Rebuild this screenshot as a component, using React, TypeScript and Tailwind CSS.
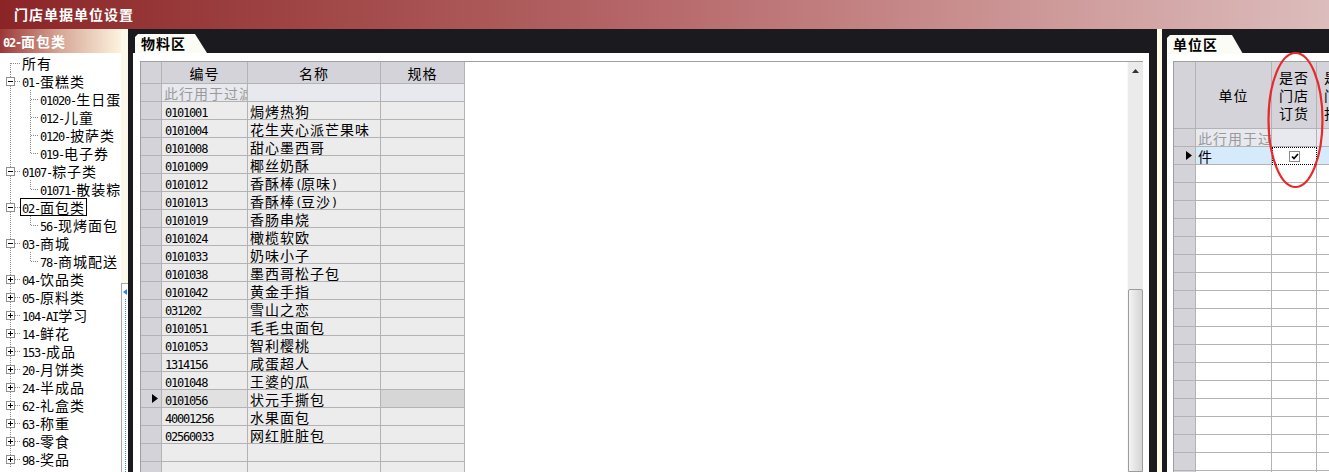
import React from "react";

type TreeNode = {
  label: string;
  level: 0 | 1;
  box?: "-" | "+";
  last?: boolean;
  first?: boolean;
  focus?: boolean;
};

const tree: TreeNode[] = [
  { label: "所有", level: 0, first: true },
  { label: "01-蛋糕类", level: 0, box: "-" },
  { label: "01020-生日蛋糕", level: 1 },
  { label: "012-儿童", level: 1 },
  { label: "0120-披萨类", level: 1 },
  { label: "019-电子券", level: 1, last: true },
  { label: "0107-粽子类", level: 0, box: "-" },
  { label: "01071-散装粽子", level: 1, last: true },
  { label: "02-面包类", level: 0, box: "-", focus: true },
  { label: "56-现烤面包", level: 1, last: true },
  { label: "03-商城", level: 0, box: "-" },
  { label: "78-商城配送", level: 1, last: true },
  { label: "04-饮品类", level: 0, box: "+" },
  { label: "05-原料类", level: 0, box: "+" },
  { label: "104-AI学习", level: 0, box: "+" },
  { label: "14-鲜花", level: 0, box: "+" },
  { label: "153-成品", level: 0, box: "+" },
  { label: "20-月饼类", level: 0, box: "+" },
  { label: "24-半成品", level: 0, box: "+" },
  { label: "62-礼盒类", level: 0, box: "+" },
  { label: "63-称重", level: 0, box: "+" },
  { label: "68-零食", level: 0, box: "+" },
  { label: "98-奖品", level: 0, box: "+" },
];

const items: [string, string][] = [
  ["0101001", "焗烤热狗"],
  ["0101004", "花生夹心派芒果味"],
  ["0101008", "甜心墨西哥"],
  ["0101009", "椰丝奶酥"],
  ["0101012", "香酥棒(原味)"],
  ["0101013", "香酥棒(豆沙)"],
  ["0101019", "香肠串烧"],
  ["0101024", "橄榄软欧"],
  ["0101033", "奶味小子"],
  ["0101038", "墨西哥松子包"],
  ["0101042", "黄金手指"],
  ["031202", "雪山之恋"],
  ["0101051", "毛毛虫面包"],
  ["0101053", "智利樱桃"],
  ["1314156", "咸蛋超人"],
  ["0101048", "王婆的瓜"],
  ["0101056", "状元手撕包"],
  ["40001256", "水果面包"],
  ["02560033", "网红脏脏包"],
];

// ascii runs get a narrow mono face, CJK stays in Noto
function Txt({ s }: { s: string }) {
  const parts = s.split(/([\x20-\x7e]+)/).filter(Boolean);
  return (
    <>
      {parts.map((p, i) =>
        /^[\x20-\x7e]+$/.test(p) ? (
          <span key={i} className="font-['DejaVu_Sans_Mono',monospace] text-[12px] tracking-[-1.2px]">
            {p}
          </span>
        ) : (
          <span key={i}>{p}</span>
        )
      )}
    </>
  );
}

function Arrow() {
  return (
    <svg width="6" height="9" viewBox="0 0 6 9">
      <polygon points="0,0 6,4.5 0,9" fill="#000" />
    </svg>
  );
}

function TreeLines({ n }: { n: TreeNode }) {
  const dot = { stroke: "#8a8a8a", strokeDasharray: "1 1", strokeWidth: 1 };
  if (n.level === 1) {
    return (
      <svg width="38" height="18" className="shrink-0">
        <line x1="10.5" y1="0" x2="10.5" y2="18" {...dot} />
        <line x1="30.5" y1="0" x2="30.5" y2={n.last ? 9.5 : 18} {...dot} />
        <line x1="31" y1="9.5" x2="39" y2="9.5" {...dot} />
      </svg>
    );
  }
  return (
    <svg width="20" height="18" className="shrink-0">
      <line x1="10.5" y1={n.first ? 9 : 0} x2="10.5" y2="18" {...dot} />
      {n.box ? (
        <>
          <line x1="15" y1="9.5" x2="20" y2="9.5" {...dot} />
          <rect x="6.5" y="5.5" width="8" height="8" fill="#fff" stroke="#8f8f8f" />
          <line x1="8" y1="9.5" x2="13" y2="9.5" stroke="#000" />
          {n.box === "+" && <line x1="10.5" y1="7" x2="10.5" y2="12" stroke="#000" />}
        </>
      ) : (
        <line x1="11" y1="9.5" x2="20" y2="9.5" {...dot} />
      )}
    </svg>
  );
}

function Tab({ label, w, cut }: { label: string; w: number; cut: string }) {
  return (
    <div
      className={`h-[19px] bg-[#fcfcf6] pl-[6px] leading-[19px] font-bold ${cut}`}
      style={{ width: w }}
    >
      {label}
    </div>
  );
}

const cell = "h-[18px] border-r border-b border-[#b3b3b3] overflow-hidden whitespace-nowrap leading-[18px]";
const rowHead = `${cell} bg-[#d3d3d9] flex items-center justify-end pr-[3px]`;

export default function App() {
  return (
    <div className="relative w-[1329px] h-[472px] overflow-hidden flex flex-col bg-[#1b1a1f] font-['Noto_Sans_CJK_SC',sans-serif] text-[14px] tracking-[1px] text-black">
      {/* Title */}
      <header className="h-[29px] shrink-0 bg-linear-to-r from-[#8b2427] via-[#b7696b] to-[#dcbcbc] pl-[14px] leading-[29px] font-bold text-white">
        门店单据单位设置
      </header>

      <div className="flex flex-1 min-h-0">
        {/* Category tree */}
        <aside className="flex w-[128px] shrink-0">
          <div className="w-[121px] flex flex-col bg-white overflow-hidden">
            <div className="h-[24px] shrink-0 bg-linear-to-r from-[#9b3638] via-[#d6a898] to-[#fcf3de] pl-[3px] leading-[24px] font-bold text-white">
              <Txt s="02-面包类" />
            </div>
            <div className="pt-[1px]">
              {tree.map((n) => (
                <div key={n.label} className="flex h-[18px] items-center whitespace-nowrap">
                  <TreeLines n={n} />
                  <span
                    className={`px-[1px] h-[18px] leading-[16px] border ${n.focus ? "border-black" : "border-transparent"}`}
                  >
                    <Txt s={n.label} />
                  </span>
                </div>
              ))}
            </div>
          </div>
          <div className="w-[7px] flex flex-col bg-[#fdf9ea]">
            <div className="h-[254px] shrink-0" />
            <div className="flex-1 border-l border-t border-[#a9a9a9] bg-white flex flex-col items-center">
              <svg width="4" height="6" className="mt-[5px]">
                <polygon points="4,0 0,3 4,6" fill="#2f83ea" />
              </svg>
              <div className="flex-1 border-l border-dotted border-[#3d8ef0] mt-[4px]" />
            </div>
          </div>
        </aside>

        <div className="w-[5px] shrink-0" />

        {/* 物料区 */}
        <section className="w-[1016px] shrink-0 flex flex-col">
          <div className="h-[24px] shrink-0 pt-[5px] pl-[2px]">
            <Tab label="物料区" w={72} cut="[clip-path:polygon(0_3px,3px_0,60px_0,72px_100%,0_100%)]" />
          </div>
          <div className="flex-1 min-h-0 bg-white pl-[7px] pr-[6px] pt-[8px] flex">
            <div className="flex-1 min-w-0 border-l border-t border-[#a0a0a0] flex">
              <div className="flex-1 min-w-0 overflow-hidden">
                <div className="grid grid-cols-[21px_86px_133px_84px] w-max">
                  <div className={`${cell} h-[22px] bg-[#d3d3d9]`} />
                  <div className={`${cell} h-[22px] leading-[22px] bg-[#d3d3d9] text-center`}>编号</div>
                  <div className={`${cell} h-[22px] leading-[22px] bg-[#d3d3d9] text-center`}>名称</div>
                  <div className={`${cell} h-[22px] leading-[22px] bg-[#d3d3d9] text-center`}>规格</div>

                  <div className={rowHead} />
                  <div className={`${cell} bg-[#e7e9ef] pl-[2px] text-[#9a9a9a]`}>此行用于过滤</div>
                  <div className={`${cell} bg-[#e7e9ef]`} />
                  <div className={`${cell} bg-[#e7e9ef]`} />

                  {items.map(([code, name]) => {
                    const sel = code === "0101056";
                    return (
                      <React.Fragment key={code}>
                        <div className={rowHead}>{sel && <Arrow />}</div>
                        <div className={`${cell} pl-[3px] ${sel ? "bg-[#e1e1e1]" : "bg-[#ececec]"}`}>
                          <Txt s={code} />
                        </div>
                        <div className={`${cell} pl-[2px] bg-[#ececec]`}>
                          <Txt s={name} />
                        </div>
                        <div className={`${cell} ${sel ? "bg-[#d6d6d6]" : "bg-[#ececec]"}`} />
                      </React.Fragment>
                    );
                  })}

                  {[0, 1, 2].map((i) => (
                    <React.Fragment key={i}>
                      <div className={rowHead} />
                      <div className={`${cell} bg-[#ececec]`} />
                      <div className={`${cell} bg-[#ececec]`} />
                      <div className={`${cell} bg-[#ececec]`} />
                    </React.Fragment>
                  ))}
                </div>
              </div>

              {/* scrollbar */}
              <div className="w-[16px] shrink-0 bg-[#ebebeb] border-l border-[#f8f8f8] flex flex-col items-center">
                <svg width="7" height="4" className="mt-[7px] shrink-0">
                  <polygon points="3.5,0 7,4 0,4" fill="#333" />
                </svg>
                <div className="h-[216px] shrink-0" />
                <div className="w-[15px] flex-1 rounded-t-[2px] border border-[#9c9c9c] bg-linear-to-r from-[#f4f4f4] to-[#d4d4d4]" />
              </div>
            </div>
          </div>
        </section>

        {/* splitter */}
        <div className="w-[8px] shrink-0" />
        <div className="w-[5px] shrink-0 bg-[#fffbea]" />
        <div className="w-[5px] shrink-0" />

        {/* 单位区 */}
        <section className="flex-1 min-w-0 flex flex-col">
          <div className="h-[24px] shrink-0 pt-[6px]">
            <Tab label="单位区" w={76} cut="[clip-path:polygon(0_3px,3px_0,65px_0,76px_100%,0_100%)]" />
          </div>
          <div className="flex-1 min-h-0 bg-white pl-[6px] pt-[8px] flex">
            <div className="flex-1 min-w-0 border-l border-t border-[#a0a0a0] overflow-hidden">
              <div className="grid grid-cols-[22px_76px_45px_45px] w-max">
                <div className={`${cell} h-[67px] bg-[#d3d3d9]`} />
                <div className={`${cell} h-[67px] bg-[#d3d3d9] flex items-center justify-center`}>单位</div>
                <div className={`${cell} h-[67px] bg-[#d3d3d9] flex flex-col items-center justify-center leading-[15px]`}>
                  <span>是否</span>
                  <span>门店</span>
                  <span>订货</span>
                </div>
                <div className={`${cell} h-[67px] bg-[#d3d3d9] flex flex-col items-center justify-center leading-[15px]`}>
                  <span>是否</span>
                  <span>门店</span>
                  <span>打印</span>
                </div>

                <div className={rowHead} />
                <div className={`${cell} bg-[#e7e9ef] pl-[2px] text-[#9a9a9a]`}>此行用于过滤</div>
                <div className={`${cell} bg-[#e7e9ef]`} />
                <div className={`${cell} bg-[#e7e9ef]`} />

                <div className={rowHead}>
                  <Arrow />
                </div>
                <div className={`${cell} bg-[#d5ebfc] pl-[2px]`}>件</div>
                <div className={`${cell} bg-white border border-dotted border-black flex items-center justify-center`}>
                  <div className="w-[11px] h-[11px] border border-[#8a8a8a] bg-white flex items-center justify-center">
                    <svg width="8" height="7" viewBox="0 0 8 7">
                      <polyline points="1,3.5 3,5.5 7,1" fill="none" stroke="#000" strokeWidth="1.6" />
                    </svg>
                  </div>
                </div>
                <div className={`${cell} bg-[#d5ebfc]`} />

                {Array.from({ length: 18 }).map((_, i) => (
                  <React.Fragment key={i}>
                    <div className={rowHead} />
                    <div className={`${cell} bg-white`} />
                    <div className={`${cell} bg-white`} />
                    <div className={`${cell} bg-white`} />
                  </React.Fragment>
                ))}
              </div>
            </div>
          </div>
        </section>
      </div>

      {/* red annotation */}
      <svg className="absolute left-[1265px] top-[50px]" width="62" height="142">
        <ellipse cx="30.5" cy="70" rx="27" ry="67" fill="none" stroke="#e8292c" strokeWidth="2.2" />
      </svg>
    </div>
  );
}
